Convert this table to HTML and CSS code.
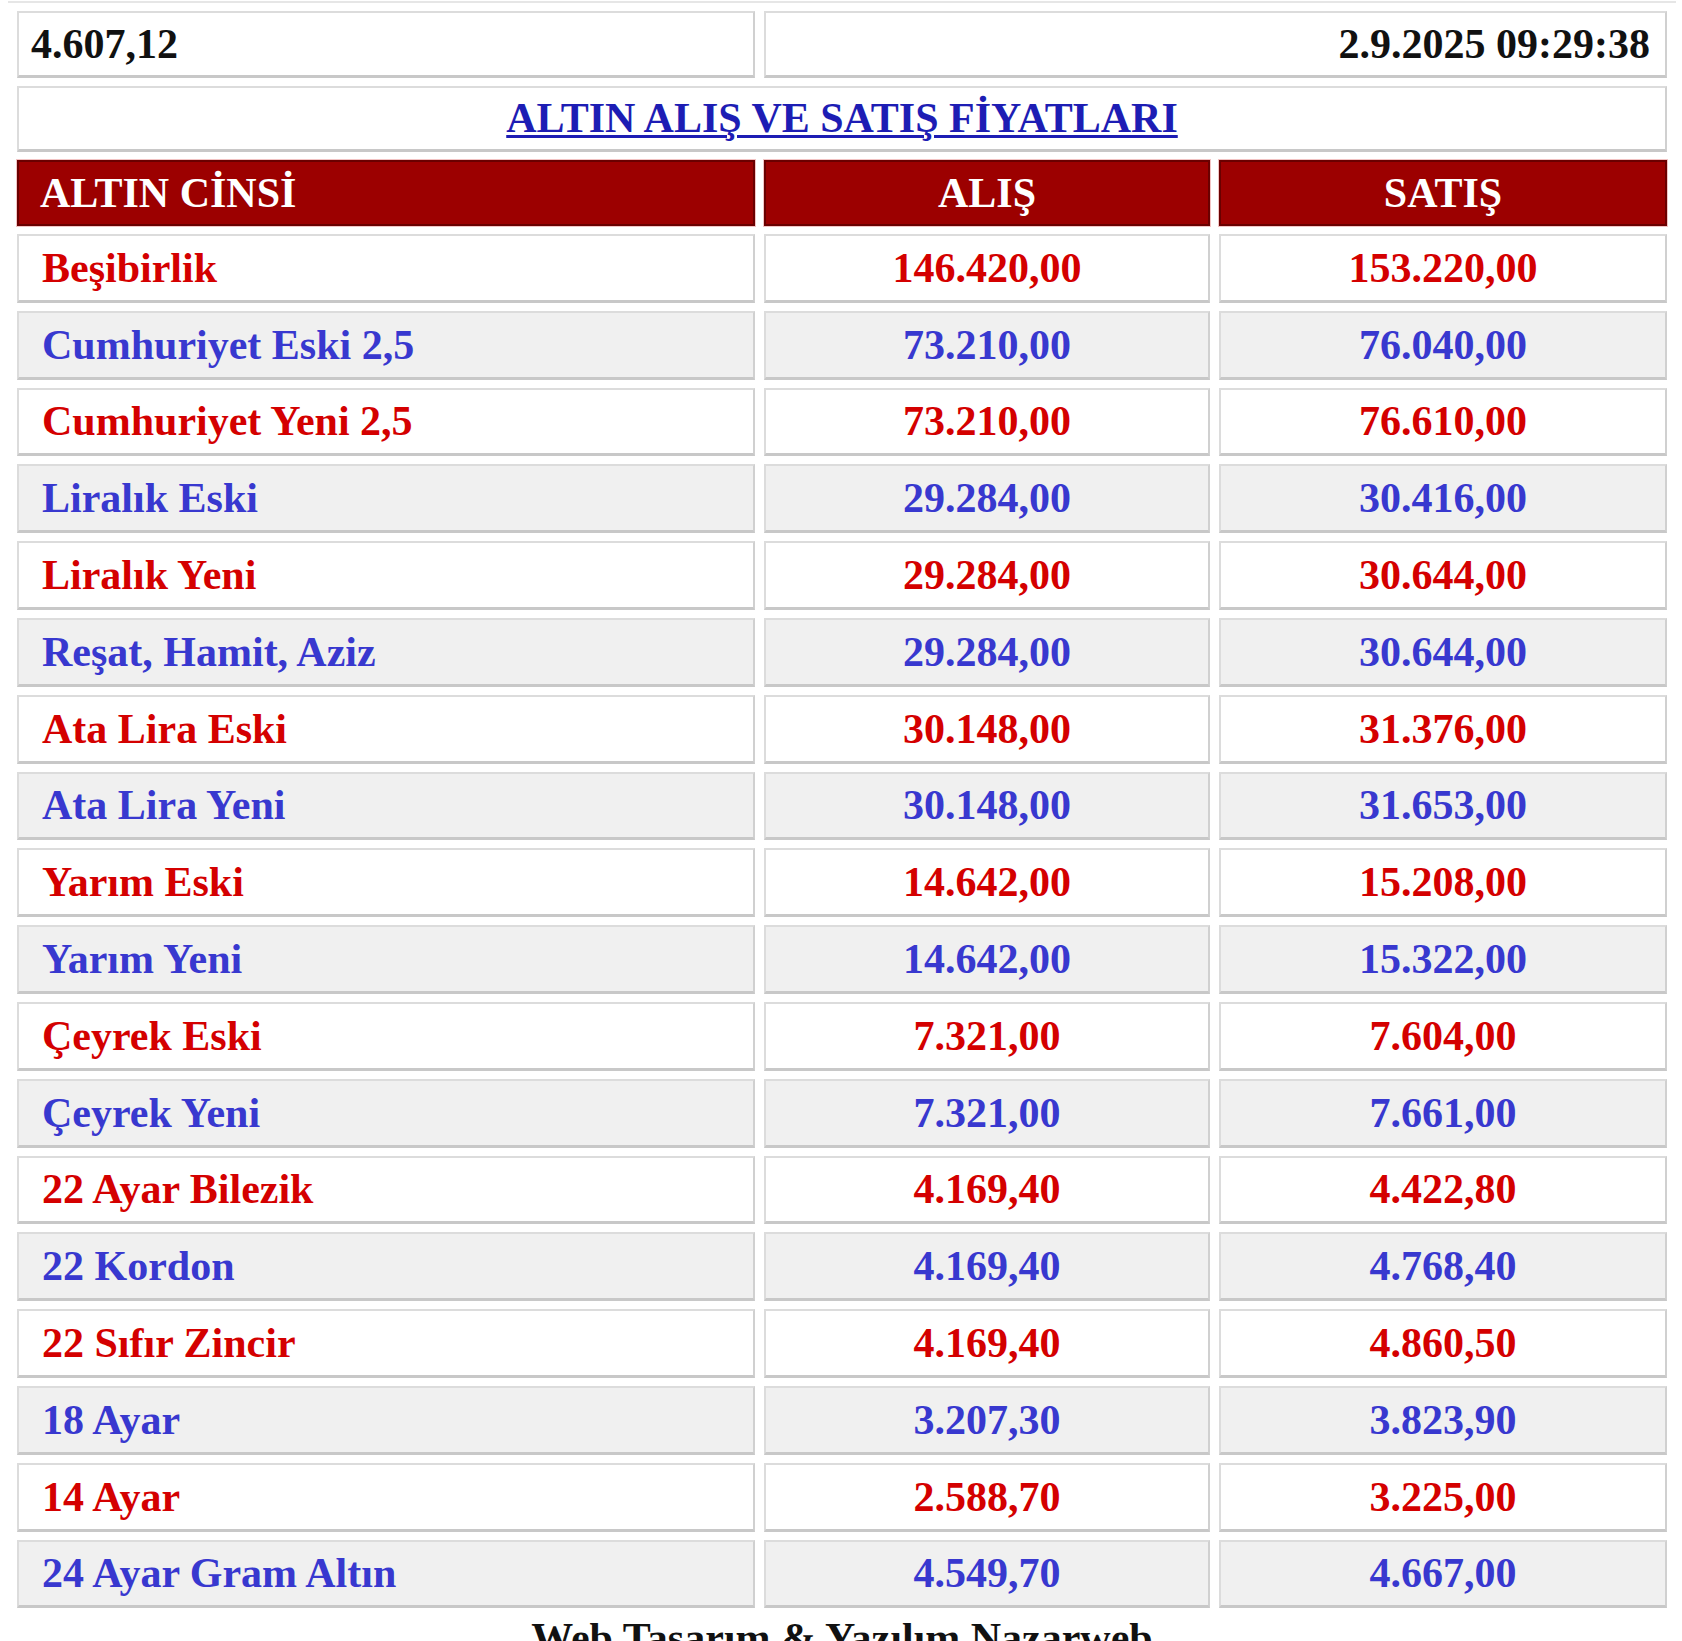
FILE: index.html
```html
<!DOCTYPE html>
<html lang="tr">
<head>
<meta charset="utf-8">
<title>Altın Alış ve Satış Fiyatları</title>
<link rel="stylesheet" href="styles.css">
</head>
<body>
<div class="topline"></div>
<table class="prices">
  <colgroup>
    <col class="c-name">
    <col class="c-buy">
    <col class="c-sell">
  </colgroup>
  <tr class="info">
    <td class="rate">4.607,12</td>
    <td class="date" colspan="2">2.9.2025 09:29:38</td>
  </tr>
  <tr class="info">
    <td class="title" colspan="3"><a href="#">ALTIN ALIŞ VE SATIŞ FİYATLARI</a></td>
  </tr>
  <tr class="head">
    <th class="h-name">ALTIN CİNSİ</th>
    <th>ALIŞ</th>
    <th>SATIŞ</th>
  </tr>
  <tr class="row red"><td class="name">Beşibirlik</td><td>146.420,00</td><td>153.220,00</td></tr>
  <tr class="row blue"><td class="name">Cumhuriyet Eski 2,5</td><td>73.210,00</td><td>76.040,00</td></tr>
  <tr class="row red"><td class="name">Cumhuriyet Yeni 2,5</td><td>73.210,00</td><td>76.610,00</td></tr>
  <tr class="row blue"><td class="name">Liralık Eski</td><td>29.284,00</td><td>30.416,00</td></tr>
  <tr class="row red"><td class="name">Liralık Yeni</td><td>29.284,00</td><td>30.644,00</td></tr>
  <tr class="row blue"><td class="name">Reşat, Hamit, Aziz</td><td>29.284,00</td><td>30.644,00</td></tr>
  <tr class="row red"><td class="name">Ata Lira Eski</td><td>30.148,00</td><td>31.376,00</td></tr>
  <tr class="row blue"><td class="name">Ata Lira Yeni</td><td>30.148,00</td><td>31.653,00</td></tr>
  <tr class="row red"><td class="name">Yarım Eski</td><td>14.642,00</td><td>15.208,00</td></tr>
  <tr class="row blue"><td class="name">Yarım Yeni</td><td>14.642,00</td><td>15.322,00</td></tr>
  <tr class="row red"><td class="name">Çeyrek Eski</td><td>7.321,00</td><td>7.604,00</td></tr>
  <tr class="row blue"><td class="name">Çeyrek Yeni</td><td>7.321,00</td><td>7.661,00</td></tr>
  <tr class="row red"><td class="name">22 Ayar Bilezik</td><td>4.169,40</td><td>4.422,80</td></tr>
  <tr class="row blue"><td class="name">22 Kordon</td><td>4.169,40</td><td>4.768,40</td></tr>
  <tr class="row red"><td class="name">22 Sıfır Zincir</td><td>4.169,40</td><td>4.860,50</td></tr>
  <tr class="row blue"><td class="name">18 Ayar</td><td>3.207,30</td><td>3.823,90</td></tr>
  <tr class="row red"><td class="name">14 Ayar</td><td>2.588,70</td><td>3.225,00</td></tr>
  <tr class="row blue"><td class="name">24 Ayar Gram Altın</td><td>4.549,70</td><td>4.667,00</td></tr>
</table>
<div class="footer">Web Tasarım &amp; Yazılım Nazarweb</div>
</body>
</html>
```

FILE: styles.css
```css
html, body {
  background: #ffffff;
}

body {
  margin: 0 6px 0 8px;
  font-family: "Liberation Serif", "Times New Roman", serif;
  font-weight: bold;
  font-size: 42px;
  color: #111111;
}

.topline {
  margin: 1px -6px 0 -8px;
  border-top: 2px solid #e6e6e6;
}

.prices {
  width: 100%;
  table-layout: fixed;
  border-collapse: separate;
  border-spacing: 9px 8px;
}

.c-name { width: 738px; }
.c-buy { width: 446px; }

.prices td,
.prices th {
  box-sizing: border-box;
  padding: 0;
  vertical-align: middle;
  line-height: 1;
}

.prices td {
  border: 2px solid #dcdcdc;
  border-right-color: #d0d0d0;
  border-bottom: 3px solid #c8c8c8;
  text-align: center;
}

.info td {
  height: 66.5px;
  background: #ffffff;
}

.info .rate {
  text-align: left;
  padding-left: 12px;
}

.info .date {
  text-align: right;
  padding-right: 15px;
}

.title a {
  color: #1d1db4;
  text-decoration: underline;
  text-decoration-thickness: 3px;
  text-underline-offset: 3px;
}

.head th {
  height: 66px;
  background: #9c0000;
  color: #ffffff;
  border: 2px solid #6a0000;
  box-shadow: 0 0 0 1px #f2c4c4;
  font-weight: bold;
  text-align: center;
}

.head .h-name {
  text-align: left;
  padding-left: 21px;
}

.row td {
  height: 68.8px;
}

.row .name {
  text-align: left;
  padding-left: 23px;
}

.red td {
  background: #ffffff;
  color: #d40000;
}

.blue td {
  background: #f0f0f0;
  color: #3838cf;
}

.footer {
  text-align: center;
  color: #111111;
  margin-top: -2px;
  line-height: 1.15;
}
```
